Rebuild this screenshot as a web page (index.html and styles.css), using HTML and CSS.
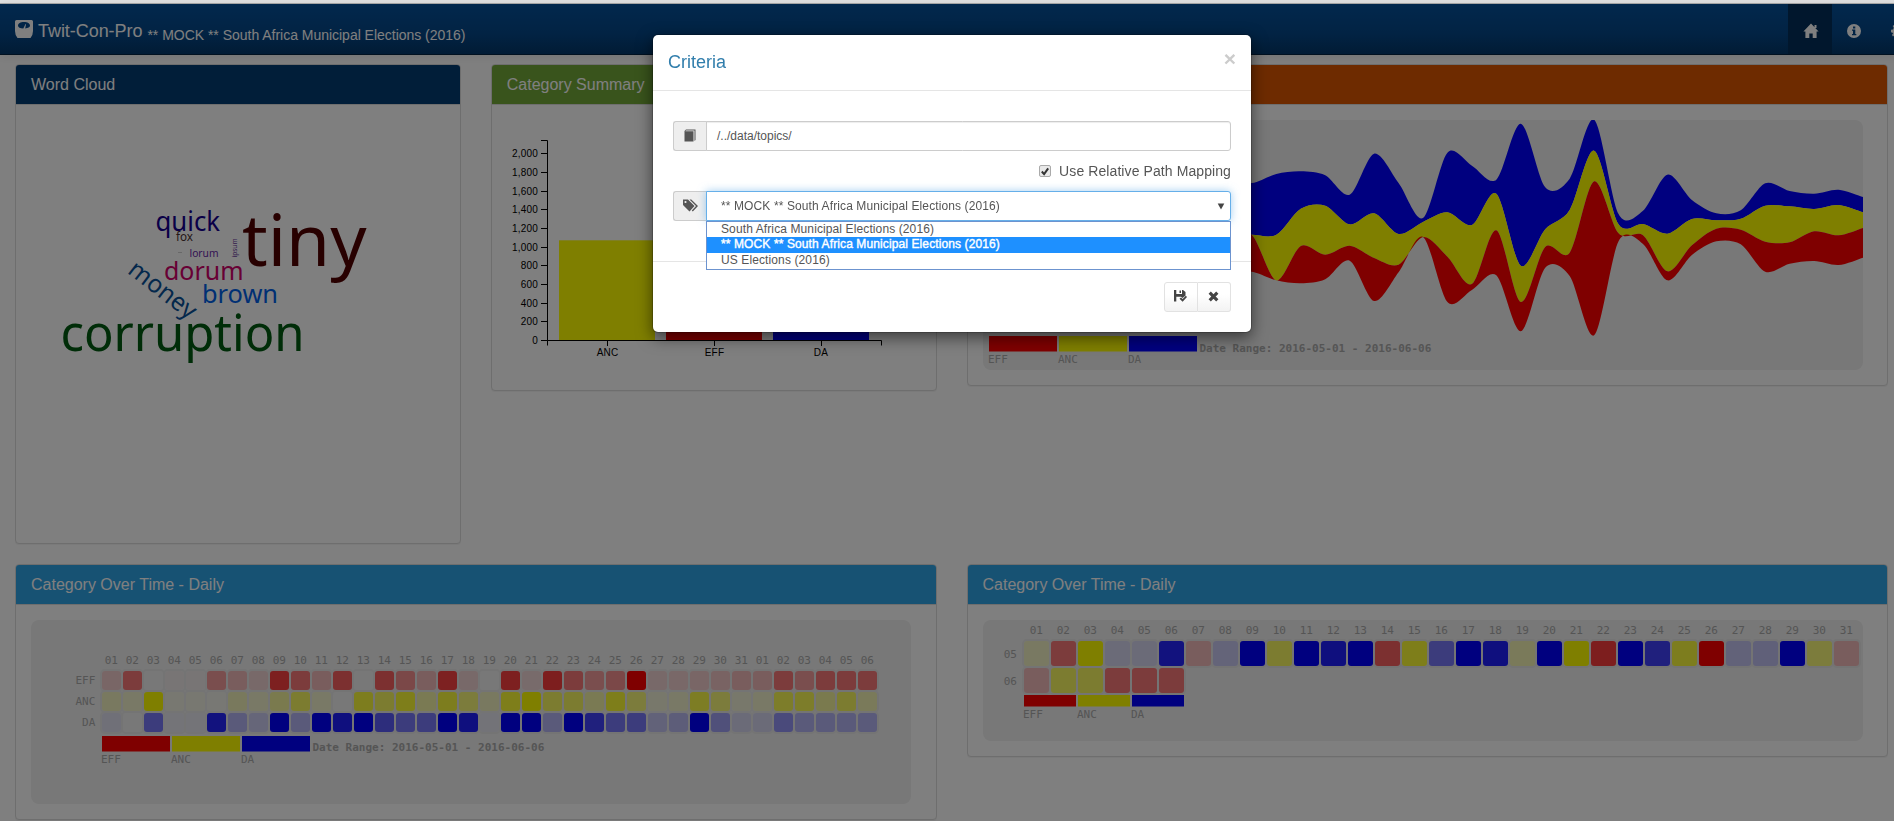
FILE: index.html
```
<!DOCTYPE html>
<html lang="en">
<head>
<meta charset="utf-8">
<title>Twit-Con-Pro</title>
<link rel="stylesheet" href="styles.css">
</head>
<body>
<div class="top-strip"></div>
<header class="navbar">
  <div class="brand">
    <svg class="brand-icon" width="18" height="18" viewBox="0 0 18 18"><path fill="#fff" fill-rule="evenodd" d="M1.500 0H16.500Q18 0 18 1.500V11Q18 15 15.500 18H2.500Q0 15 0 11V1.500Q0 0 1.500 0ZM9 2C5.500 2 3 3.600 3 5.600C3 7.600 5 8.500 8.300 8.500L10.500 4L11 4.300L10.200 8.500C13 8.300 15 7.400 15 5.600C15 3.600 12.500 2 9 2Z"/></svg>
    <span class="brand-name">Twit-Con-Pro</span>
    <span class="brand-topic">** MOCK ** South Africa Municipal Elections (2016)</span>
  </div>
  <nav class="nav-right">
    <a class="nav-item active"><svg width="16" height="16" viewBox="0 0 16 16"><path fill="#fff" d="M8 0.500L15.600 8.400H13.600V15H9.700V10.500H6.300V15H2.400V8.400H0.400ZM11.500 2H13.500V5H11.500Z"/></svg></a>
    <a class="nav-item"><svg width="14" height="14" viewBox="0 0 14 14"><path fill="#fff" fill-rule="evenodd" d="M7 0A7 7 0 1 1 7 14A7 7 0 0 1 7 0ZM6 2.500V4.500H8.300V2.500ZM5 5.500V6.700H6V10H5V11.300H9.300V10H8.300V5.500Z"/></svg></a>
    <a class="nav-item"><svg width="14" height="14" viewBox="0 0 14 14"><path fill="#fff" fill-rule="evenodd" d="M5.800 0H8.200L8.600 2L10.200 2.700L11.900 1.500L13 3L11.800 5L14 5.800V8.200L12 8.600L11.300 10.200L12.400 12L11 13L9 11.900L8.200 14H5.800L5.400 12L3.800 11.300L2 12.400L1 11L2.200 9L0 8.200V5.800L2 5.400L2.700 3.800L1.600 2L3 1L5 2.200ZM7 4.500A2.500 2.500 0 1 0 7 9.500A2.500 2.500 0 0 0 7 4.500Z"/></svg></a>
  </nav>
</header>

<main class="board">
  <section class="panel panel-cloud">
    <h3 class="panel-heading primary">Word Cloud</h3>
    <div class="panel-body">
      <svg class="cloud" width="414" height="408" viewBox="31 120 414 408">
        <text x="60.500" y="351" font-size="51" fill="#005a10" textLength="244" lengthAdjust="spacingAndGlyphs">corruption</text>
        <text x="242" y="266" font-size="72" fill="#500000" textLength="124.500" lengthAdjust="spacingAndGlyphs">tiny</text>
        <text x="155.500" y="231" font-size="26.500" fill="#140090" textLength="64.500" lengthAdjust="spacingAndGlyphs">quick</text>
        <text x="176" y="241" font-size="12" fill="#4a3030" textLength="17" lengthAdjust="spacingAndGlyphs">fox</text>
        <text x="189.500" y="257" font-size="10" fill="#6a2aa8" textLength="29" lengthAdjust="spacingAndGlyphs">lorum</text>
        <text x="164" y="279.700" font-size="25" fill="#d0006a" textLength="79.500" lengthAdjust="spacingAndGlyphs">dorum</text>
        <text x="202" y="303" font-size="25" fill="#0060e8" textLength="76" lengthAdjust="spacingAndGlyphs">brown</text>
        <text transform="translate(126.500 272.500) rotate(37.500)" font-size="25" fill="#085098" textLength="78.500" lengthAdjust="spacingAndGlyphs">money</text>
        <text transform="translate(236.500 257.500) rotate(-90)" font-size="7" fill="#6a3a9c" textLength="19" lengthAdjust="spacingAndGlyphs">ipsum</text>
        <path d="M178 252.500H182" stroke="#d0d0d0"/>
      </svg>
    </div>
  </section>

  <section class="panel">
    <h3 class="panel-heading success">Category Summary</h3>
    <div class="panel-body">
      <svg id="bars" class="bars" width="414" height="255" viewBox="507 120 414 255"></svg>
    </div>
  </section>

  <section class="panel">
    <h3 class="panel-heading warning">Category Over Time</h3>
    <div class="panel-body">
      <svg id="stream" class="chart mono" width="880" height="250" viewBox="983 120 880 250"></svg>
    </div>
  </section>

  <section class="panel panel-wide">
    <h3 class="panel-heading info">Category Over Time - Daily</h3>
    <div class="panel-body">
      <svg id="daily" class="chart mono" width="880" height="184" viewBox="31 620 880 184"></svg>
    </div>
  </section>

  <section class="panel">
    <h3 class="panel-heading info">Category Over Time - Daily</h3>
    <div class="panel-body">
      <svg id="monthly" class="chart mono" width="880" height="121" viewBox="983 620 880 121"></svg>
    </div>
  </section>
</main>

<div class="backdrop"></div>

<div class="modal">
  <div class="modal-header">
    <h4 class="modal-title">Criteria</h4>
    <span class="modal-close">×</span>
  </div>
  <div class="modal-body">
    <div class="field">
      <span class="addon"><svg width="12" height="13" viewBox="0 0 12 13"><path fill="#555" d="M2 0.500H11.500V11L10.500 12V1.500H2L1.300 2.200H9.500V12.500H0.500V2Z"/></svg></span>
      <div class="input">/../data/topics/</div>
    </div>
    <label class="check-row">
      <span class="checkbox"><svg width="11" height="11" viewBox="0 0 11 11"><path d="M2 5.500L4.500 8.300L9 2" fill="none" stroke="#333" stroke-width="2.200"/></svg></span>
      <span>Use Relative Path Mapping</span>
    </label>
    <div class="field select-field">
      <span class="addon"><svg width="15" height="13" viewBox="0 0 15 13"><path fill="#555" fill-rule="evenodd" d="M0 0.500H5L11.500 7L6.500 12.500L0 6ZM2.500 1.900A1.100 1.100 0 1 0 2.500 4.100A1.100 1.100 0 0 0 2.500 1.900ZM6.500 0.500H8.300L15 7L9.800 12.500L8.800 11.600L13 7Z"/></svg></span>
      <div class="input select">
        <span>** MOCK ** South Africa Municipal Elections (2016)</span>
        <svg width="8" height="7" viewBox="0 0 8 7"><path fill="#444" d="M0.700 0.500H7.300L4 6.500Z"/></svg>
      </div>
      <ul class="options">
        <li>South Africa Municipal Elections (2016)</li>
        <li class="selected">** MOCK ** South Africa Municipal Elections (2016)</li>
        <li>US Elections (2016)</li>
      </ul>
    </div>
  </div>
  <div class="modal-footer">
    <div class="btn-group">
      <span class="btn"><svg width="13" height="12" viewBox="0 0 13 12"><path fill="#444" d="M0 0H2.300V4H8V0H9L11.500 2V5.500L8.500 8L7 6.700H2.300V11.500H0ZM5.500 0.500H7V3H5.500ZM5.500 8.800L7 7.600L8.600 9L11.800 5.800L13 7L8.600 11.800Z"/></svg></span>
      <span class="btn"><svg width="11" height="11" viewBox="0 0 11 11"><path d="M1.700 1.700L9.300 9.300M9.300 1.700L1.700 9.300" stroke="#444" stroke-width="3.200"/></svg></span>
    </div>
  </div>
</div>
<script src="charts.js"></script>
</body>
</html>
```
FILE: styles.css
```
* { box-sizing: border-box; }
html, body { height: 100%; }
body {
  margin: 0;
  overflow: hidden;
  background: #fff;
  font-family: "Liberation Sans", Arial, sans-serif;
  font-size: 14px;
  color: #555;
}
.top-strip { height: 4px; background: #e2e2e2; border-bottom: 1px solid #aaa; }
.navbar {
  width: 1903px;
  height: 51px;
  display: flex;
  padding-left: 15px;
  background: linear-gradient(#04519b, #044687 60%, #033769);
  border-bottom: 1px solid #022241;
  box-shadow: 0 1px 10px rgba(0, 0, 0, .1);
  color: #fff;
}
.brand { display: flex; align-items: baseline; height: 20px; margin-top: 16px; line-height: 22px; }
.brand-icon { display: block; align-self: flex-start; }
.brand-name { margin-left: 5px; font-size: 18px; letter-spacing: -.05px; }
.brand-topic { margin-left: 5px; font-size: 14px; position: relative; top: 3px; letter-spacing: -.02px; }
.nav-right { display: flex; margin-left: auto; margin-right: -17px; }
.nav-item { width: 44px; height: 50px; display: flex; align-items: center; justify-content: center; }
.nav-item svg { margin-top: 3px; }
.active { background: #022f5a; padding-left: 1px; }

.board {
  width: 1903px;
  display: grid;
  grid-template-columns: 475.75px 475.75px 951.5px;
  align-items: start;
  padding-top: 9px;
  row-gap: 20px;
}
.panel {
  margin: 0 15px;
  border: 1px solid #ddd;
  border-radius: 4px;
  background: #fff;
  box-shadow: 0 1px 1px rgba(0, 0, 0, .05);
}
.panel-cloud { height: 480px; }
.panel-wide { grid-column: span 2; }
.panel-heading {
  margin: 0;
  height: 40px;
  padding: 0 15px;
  font-size: 16px;
  font-weight: 400;
  line-height: 40px;
  color: #fff;
  border-bottom: 1px solid #ddd;
  border-radius: 3px 3px 0 0;
}
.primary { background: #033c73; }
.success { background: #73a839; }
.warning { background: #dd5600; }
.info { background: #2fa4e7; }
.panel-body { padding: 15px; }
.panel-body svg { display: block; }
.chart { background: #f0f0f0; border-radius: 8px; }
.cloud { font-family: "Noto Sans", sans-serif; }
.bars { font-family: "Liberation Sans", Arial, sans-serif; font-size: 10px; letter-spacing: .2px; fill: #000; }
.mono { font-family: "DejaVu Sans Mono", monospace; font-size: 11px; fill: #aaa; }
.range { font-weight: bold; }

.backdrop { position: fixed; inset: 4px 0 0 0; background: rgba(0, 0, 0, .5); }
.modal {
  position: absolute;
  top: 35px;
  left: 653px;
  width: 598px;
  height: 297px;
  background: #fff;
  border-radius: 5px;
  box-shadow: 0 0 0 1px rgba(0, 0, 0, .2), 0 5px 15px 1px rgba(0, 0, 0, .5);
}
.modal-header {
  height: 56px;
  padding: 15px;
  display: flex;
  justify-content: space-between;
  border-bottom: 1px solid #e5e5e5;
}
.modal-title { margin: 0; font-size: 18px; font-weight: 500; line-height: 24px; color: #317eac; }
.modal-close { font-size: 21px; font-weight: bold; line-height: 18px; color: #ccc; }
.modal-body { height: 171px; padding: 30px 20px 40px; border-bottom: 1px solid #e5e5e5; font-size: 12px; letter-spacing: .11px; }
.field { position: relative; display: flex; height: 30px; }
.addon {
  width: 34px;
  display: flex;
  align-items: center;
  justify-content: center;
  padding: 0 1px 2px 0;
  background: #eee;
  border: 1px solid #ccc;
  border-right: 0;
  border-radius: 3px 0 0 3px;
}
.input {
  flex: 1;
  margin-left: -1px;
  padding: 0 10px;
  line-height: 28px;
  letter-spacing: 0;
  background: #fff;
  border: 1px solid #ccc;
  border-radius: 0 3px 3px 0;
  box-shadow: inset 0 1px 1px rgba(0, 0, 0, .075);
}
.select {
  display: flex;
  align-items: center;
  justify-content: space-between;
  padding: 0 5px 0 14px;
  letter-spacing: .11px;
  border-color: #66afe9;
  box-shadow: 0 0 8px rgba(102, 175, 233, .6);
}
.options {
  position: absolute;
  z-index: 1;
  top: 30px;
  left: 33px;
  right: 0;
  height: 49px;
  margin: 0;
  padding: 0 0 1px;
  list-style: none;
  background: #fff;
  border: 1px solid #6c93cf;
}
.options li { height: 16px; padding-left: 14px; line-height: 14px; }
.options li:first-child { height: 15px; }
.options .selected { background: #1e90ff; color: #fff; -webkit-text-stroke: .4px #fff; }
.check-row { height: 40px; display: flex; align-items: center; justify-content: flex-end; gap: 8px; font-size: 14px; letter-spacing: .09px; }
.checkbox { width: 12px; height: 12px; border: 1px solid #aaa; border-radius: 2px; background: #e8e8e8; display: flex; align-items: center; justify-content: center; }
.modal-footer { padding: 20px; display: flex; justify-content: flex-end; }
.btn-group { display: flex; }
.btn {
  width: 34px;
  height: 30px;
  display: flex;
  align-items: center;
  justify-content: center;
  padding: 0 1px 2px 0;
  border: 1px solid #e2e2e2;
  background: linear-gradient(#fff, #fff 40%, #f3f3f3);
  border-radius: 3px 0 0 3px;
}
.btn + .btn { width: 33px; border-left: 0; border-radius: 0 3px 3px 0; }
```
FILE: charts.js
```
const RED = '#f00', YELLOW = '#ff0', BLUE = '#00f';
const pad = n => String(n).padStart(2, '0');
const rect = (x, y, w, h, fill, extra = '') => `<rect x="${x}" y="${y}" width="${w}" height="${h}" fill="${fill}" ${extra}/>`;
const text = (x, y, s, extra = '') => `<text x="${x}" y="${y}" ${extra}>${s}</text>`;
const END = 'text-anchor="end"', MID = 'text-anchor="middle"';

function legend(x, y, w, h, pitch, labelY) {
  return [['EFF', RED], ['ANC', YELLOW], ['DA', BLUE]].map(([name, color], i) =>
    rect(x + i * pitch, y, w, h, color) + text(x - 1 + i * pitch, labelY, name)).join('');
}
function cell(x, y, size, color, alpha) {
  return rect(x - 1, y - 1, size + 2, size + 2, 'none', 'rx="4" stroke="#e8e8e8" stroke-width="2"') +
    rect(x, y, size, size, '#f0f0f0', 'rx="3"') +
    rect(x, y, size, size, color, `rx="3" fill-opacity="${alpha}"`);
}

// Category totals
let bars = rect(559, 240.3, 96, 100, YELLOW) + rect(666, 290, 96, 50, RED) + rect(773, 200, 96, 140, BLUE);
bars += '<path d="M541 140.5H547.5V340.5H541M547.5 345.5V340.5H881.5V345.500M607.5 340V346M714.5 340V346M821.5 340V346" fill="none" stroke="#000"/>';
for (let v = 0; v <= 2000; v += 200) {
  const y = Math.round(340 - v * 0.0933) + 0.5;
  bars += `<path d="M541 ${y}H547" stroke="#000"/>` + text(538, y + 3, v.toLocaleString('en-US'), END);
}
bars += text(607.5, 356, 'ANC', MID) + text(714.5, 356, 'EFF', MID) + text(821, 356, 'DA', MID);
document.getElementById('bars').innerHTML = bars;

// Stream layers: boundaries from the top down, starting at day index 10
const edges = [
  [243,249,222,214,226,284,161,249,354,158,197,239,71,262,236,59,342,332,224,300,340,331,250,273,281,269,291],
  [404,404,404,326,317,373,340,402,366,337,375,281,497,388,330,152,373,372,401,357,361,356,317,319,327,315,337],
  [404,405,541,438,464,437,474,494,411,470,552,391,606,441,458,244,400,406,514,436,386,389,425,427,394,406,384],
  [520,515,541,550,538,482,603,517,411,606,570,526,694,503,528,706,424,432,541,465,424,433,515,491,483,495,473]
].map(e => e.map((y, i) => [983 + (i + 10) * 880 / 36, 100 + y / 3]));
function curve(p) {
  const k = 0.15;
  const t = p.map((_, i) => {
    const a = p[Math.max(i - 1, 0)], b = p[Math.min(i + 1, p.length - 1)];
    return [k * (b[0] - a[0]), k * (b[1] - a[1])];
  });
  return p.slice(1).map((q, i) => `C${p[i][0] + t[i][0]} ${p[i][1] + t[i][1]} ${q[0] - t[i + 1][0]} ${q[1] - t[i + 1][1]} ${q[0]} ${q[1]}`).join('');
}
const layer = (a, b, color) => {
  const r = [...b].reverse();
  return `<path fill="${color}" d="M${a[0]}${curve(a)}L${r[0]}${curve(r)}Z"/>`;
};
document.getElementById('stream').innerHTML =
  layer(edges[0], edges[1], BLUE) + layer(edges[1], edges[2], YELLOW) + layer(edges[2], edges[3], RED) +
  legend(989, 336, 68, 15.5, 70, 363) + text(1199.5, 352, 'Date Range: 2016-05-01 - 2016-06-06', 'class="range"');

// Daily heat map, one row per category
const days = [...Array(31).keys()].map(i => i + 1).concat([1, 2, 3, 4, 5, 6]);
const rows = [
  ['EFF', RED, [.15,.5,0,.02,.02,.35,.22,.12,.73,.5,.22,.6,0,.6,.4,.22,.72,.12,0,.73,.1,.75,.5,.35,.4,1,.12,.13,.15,.17,.22,.22,.5,.35,.5,.5,.5]],
  ['ANC', YELLOW, [.2,.15,1,.05,.05,.03,.22,.15,.35,.6,.15,0,.75,.6,.78,.3,.75,.5,.2,.78,1,.6,.6,.3,.78,.5,.1,.15,.7,.5,.1,.15,.65,.65,.35,.6,.25]],
  ['DA', BLUE, [.06,0,.5,.03,.03,.85,.25,.15,1,.25,1,.87,1,.62,.5,.5,1,.87,.04,1,1,.25,1,.73,.5,.5,.18,.22,1,.33,.1,.1,.38,.25,.25,.25,.25]]
];
let daily = days.map((d, i) => text(111.3 + 21 * i, 664, pad(d), MID)).join('');
rows.forEach(([name, color, alphas], r) => {
  daily += text(95.3, 684 + 21 * r, name, END);
  alphas.forEach((a, i) => { daily += cell(102 + 21 * i, 671 + 21 * r, 19, color, a); });
});
daily += legend(102, 736, 68, 15.5, 70, 763) + text(312.5, 751, 'Date Range: 2016-05-01 - 2016-06-06', 'class="range"');
document.getElementById('daily').innerHTML = daily;

// Leading category per day, one row per month
const months = [
  ['05', 'Y.18 R.5 Y1 B.1 B.1 B.85 R.22 B.16 B1 Y.6 B1 B.87 B1 R.6 Y.78 B.5 B1 B.87 Y.25 B1 Y1 R.75 B1 B.73 Y.75 R1 B.18 B.2 B1 Y.5 R.22'],
  ['06', 'R.22 Y.6 Y.6 R.5 R.5 R.5']
];
const palette = { R: RED, Y: YELLOW, B: BLUE };
let monthly = days.slice(0, 31).map((d, i) => text(1036.3 + 27 * i, 634, pad(d), MID)).join('');
months.forEach(([name, list], r) => {
  monthly += text(1017, 658 + 27 * r, name, END);
  list.split(' ').forEach((c, i) => { monthly += cell(1024 + 27 * i, 641 + 27 * r, 25, palette[c[0]], c.slice(1)); });
});
monthly += legend(1024, 695, 52, 11.5, 54, 718);
document.getElementById('monthly').innerHTML = monthly;
```
